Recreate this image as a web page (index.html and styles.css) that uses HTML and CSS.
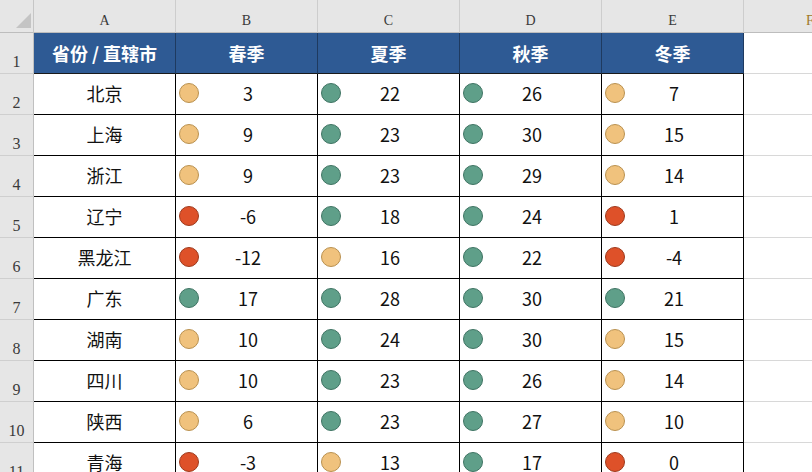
FILE: index.html
```html
<!DOCTYPE html>
<html lang="zh">
<head>
<meta charset="utf-8">
<title>季节气温</title>
<link rel="stylesheet" href="styles.css">
</head>
<body>
<div class="sheet">
  <div class="corner"><svg width="18" height="18" viewBox="0 0 18 18"><polygon points="17,1 17,16 2,16" fill="#c4c4c4"/></svg></div>
  <div class="colhead">A</div>
  <div class="colhead">B</div>
  <div class="colhead">C</div>
  <div class="colhead">D</div>
  <div class="colhead">E</div>
  <div class="colhead colhead-f">F</div>

  <div class="rowhead">1</div>
  <div class="hcell">省份 / 直辖市</div>
  <div class="hcell">春季</div>
  <div class="hcell">夏季</div>
  <div class="hcell">秋季</div>
  <div class="hcell">冬季</div>
  <div class="empty"></div>

  <div class="rowhead">2</div>
  <div class="cell name">北京</div>
  <div class="cell"><span class="dot o"></span><span class="num">3</span></div>
  <div class="cell"><span class="dot g"></span><span class="num">22</span></div>
  <div class="cell"><span class="dot g"></span><span class="num">26</span></div>
  <div class="cell"><span class="dot o"></span><span class="num">7</span></div>
  <div class="empty"></div>

  <div class="rowhead">3</div>
  <div class="cell name">上海</div>
  <div class="cell"><span class="dot o"></span><span class="num">9</span></div>
  <div class="cell"><span class="dot g"></span><span class="num">23</span></div>
  <div class="cell"><span class="dot g"></span><span class="num">30</span></div>
  <div class="cell"><span class="dot o"></span><span class="num">15</span></div>
  <div class="empty"></div>

  <div class="rowhead">4</div>
  <div class="cell name">浙江</div>
  <div class="cell"><span class="dot o"></span><span class="num">9</span></div>
  <div class="cell"><span class="dot g"></span><span class="num">23</span></div>
  <div class="cell"><span class="dot g"></span><span class="num">29</span></div>
  <div class="cell"><span class="dot o"></span><span class="num">14</span></div>
  <div class="empty"></div>

  <div class="rowhead">5</div>
  <div class="cell name">辽宁</div>
  <div class="cell"><span class="dot r"></span><span class="num">-6</span></div>
  <div class="cell"><span class="dot g"></span><span class="num">18</span></div>
  <div class="cell"><span class="dot g"></span><span class="num">24</span></div>
  <div class="cell"><span class="dot r"></span><span class="num">1</span></div>
  <div class="empty"></div>

  <div class="rowhead">6</div>
  <div class="cell name">黑龙江</div>
  <div class="cell"><span class="dot r"></span><span class="num">-12</span></div>
  <div class="cell"><span class="dot o"></span><span class="num">16</span></div>
  <div class="cell"><span class="dot g"></span><span class="num">22</span></div>
  <div class="cell"><span class="dot r"></span><span class="num">-4</span></div>
  <div class="empty"></div>

  <div class="rowhead">7</div>
  <div class="cell name">广东</div>
  <div class="cell"><span class="dot g"></span><span class="num">17</span></div>
  <div class="cell"><span class="dot g"></span><span class="num">28</span></div>
  <div class="cell"><span class="dot g"></span><span class="num">30</span></div>
  <div class="cell"><span class="dot g"></span><span class="num">21</span></div>
  <div class="empty"></div>

  <div class="rowhead">8</div>
  <div class="cell name">湖南</div>
  <div class="cell"><span class="dot o"></span><span class="num">10</span></div>
  <div class="cell"><span class="dot g"></span><span class="num">24</span></div>
  <div class="cell"><span class="dot g"></span><span class="num">30</span></div>
  <div class="cell"><span class="dot o"></span><span class="num">15</span></div>
  <div class="empty"></div>

  <div class="rowhead">9</div>
  <div class="cell name">四川</div>
  <div class="cell"><span class="dot o"></span><span class="num">10</span></div>
  <div class="cell"><span class="dot g"></span><span class="num">23</span></div>
  <div class="cell"><span class="dot g"></span><span class="num">26</span></div>
  <div class="cell"><span class="dot o"></span><span class="num">14</span></div>
  <div class="empty"></div>

  <div class="rowhead">10</div>
  <div class="cell name">陕西</div>
  <div class="cell"><span class="dot o"></span><span class="num">6</span></div>
  <div class="cell"><span class="dot g"></span><span class="num">23</span></div>
  <div class="cell"><span class="dot g"></span><span class="num">27</span></div>
  <div class="cell"><span class="dot o"></span><span class="num">10</span></div>
  <div class="empty"></div>

  <div class="rowhead">11</div>
  <div class="cell name">青海</div>
  <div class="cell"><span class="dot r"></span><span class="num">-3</span></div>
  <div class="cell"><span class="dot o"></span><span class="num">13</span></div>
  <div class="cell"><span class="dot g"></span><span class="num">17</span></div>
  <div class="cell"><span class="dot r"></span><span class="num">0</span></div>
  <div class="empty"></div>
</div>
</body>
</html>
```
FILE: styles.css
```css
html, body {
  margin: 0;
  padding: 0;
  background: #ffffff;
  overflow: hidden;
}
.sheet {
  display: grid;
  grid-template-columns: 34px repeat(5, 142px) 1fr;
  grid-template-rows: 33px repeat(11, 41px);
  width: 812px;
  height: 472px;
  overflow: hidden;
  font-family: "Noto Sans CJK SC", "Noto Sans", sans-serif;
}
.corner {
  background: #e6e6e6;
  border-right: 1px solid #c6c6c6;
  border-bottom: 1px solid #bdbdbd;
  box-sizing: border-box;
  display: flex;
  align-items: flex-end;
  justify-content: flex-end;
  padding: 0 1px 2px 0;
}
.colhead {
  background: #e6e6e6;
  border-right: 1px solid #cdcdcd;
  border-bottom: 1px solid #bdbdbd;
  box-sizing: border-box;
  display: flex;
  align-items: flex-end;
  justify-content: center;
  padding-bottom: 4px;
  font-family: "Liberation Serif", "DejaVu Serif", serif;
  font-size: 14px;
  line-height: 14px;
  color: #3a3a3a;
}
.colhead-f {
  justify-content: flex-start;
  padding-left: 62px;
  color: #a0782a;
  border-right: none;
}
.rowhead {
  background: #e6e6e6;
  border-right: 1px solid #c0c0c0;
  border-bottom: 1px solid #cfcfcf;
  box-sizing: border-box;
  display: flex;
  align-items: flex-end;
  justify-content: center;
  padding-bottom: 3px;
  font-family: "Liberation Serif", "DejaVu Serif", serif;
  font-size: 16px;
  line-height: 16px;
  color: #3a3a3a;
}
.hcell {
  background: #2e5a94;
  color: #ffffff;
  font-weight: 700;
  font-size: 18px;
  border-right: 1px solid #1e3a60;
  border-bottom: 1px solid #1a1a1a;
  box-sizing: border-box;
  display: flex;
  align-items: center;
  justify-content: center;
  padding-bottom: 1px;
}
.cell {
  background: #ffffff;
  border-right: 1px solid #000000;
  border-bottom: 1px solid #000000;
  box-sizing: border-box;
  display: grid;
  grid-template-columns: 1fr auto 1fr;
  align-items: center;
  padding-left: 3px;
  padding-bottom: 2px;
  font-size: 18px;
  color: #111111;
}
.cell.name {
  display: flex;
  justify-content: center;
  padding-left: 0;
}
.num {
  grid-column: 2;
  line-height: 1;
}
.dot {
  grid-column: 1;
  grid-row: 1;
  justify-self: start;
  width: 20px;
  height: 20px;
  border-radius: 50%;
  box-sizing: border-box;
  border: 1px solid;
}
.dot.o { background: #f0c27d; border-color: #b99150; }
.dot.g { background: #5f9f89; border-color: #3f7463; }
.dot.r { background: #de5129; border-color: #9e3a1d; }
.empty {
  background: #ffffff;
  border-bottom: 1px solid #d8d8d8;
  box-sizing: border-box;
}
```
